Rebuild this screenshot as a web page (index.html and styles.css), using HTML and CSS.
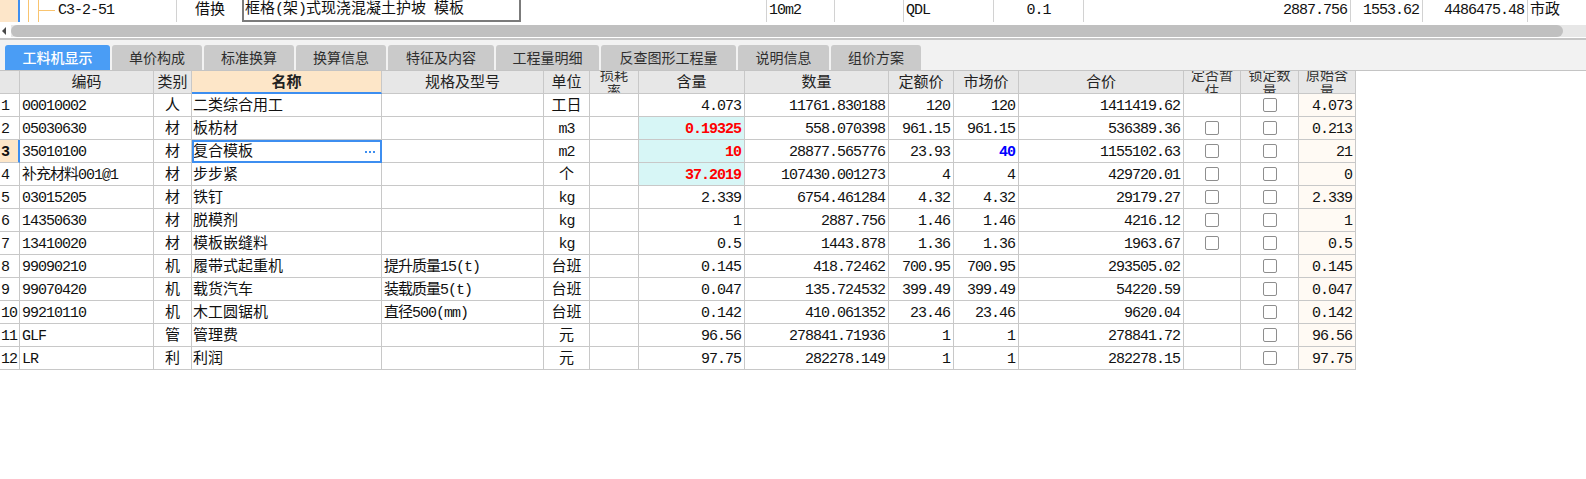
FILE: index.html
```html
<!DOCTYPE html>
<html lang="zh-CN">
<head>
<meta charset="utf-8">
<title>工料机显示</title>
<link rel="stylesheet" href="styles.css">
</head>
<body>
<div class="toprow">
  <div class="tc tsel"></div>
  <div class="tc ttree"><span class="vl v1"></span><span class="vl v2"></span><span class="hl"></span><span class="m tcode">C3-2-51</span></div>
  <div class="tc bl tjie">借换</div>
  <div class="tc tin"><div class="inbox">框格<span class="m">(</span>架<span class="m">)</span>式现浇混凝土护坡<span class="m"> </span>模板</div></div>
  <div class="tc tgap"></div>
  <div class="tc bl m w68 pl">10m2</div>
  <div class="tc bl w69"></div>
  <div class="tc bl m w90 pl">QDL</div>
  <div class="tc bl m w90 c">0.1</div>
  <div class="tc bl m w267 r">2887.756</div>
  <div class="tc bl m w72 r">1553.62</div>
  <div class="tc bl m w105 r">4486475.48</div>
  <div class="tc bl w59 pl">市政</div>
</div>
<div class="hscroll">
  <div class="sarrow"><span class="tri"></span></div>
  <div class="strack"><div class="sthumb"></div></div>
</div>
<div class="sep"></div>
<div class="tabbar">
  <div class="tab active t105">工料机显示</div>
  <div class="tab t90">单价构成</div>
  <div class="tab t90">标准换算</div>
  <div class="tab t90">换算信息</div>
  <div class="tab t106">特征及内容</div>
  <div class="tab t103">工程量明细</div>
  <div class="tab t135">反查图形工程量</div>
  <div class="tab t91">说明信息</div>
  <div class="tab t90">组价方案</div>
</div>
<div class="grid">
  <div class="g h"></div>
  <div class="g h">编码</div>
  <div class="g h">类别</div>
  <div class="g h hsel">名称</div>
  <div class="g h">规格及型号</div>
  <div class="g h">单位</div>
  <div class="g h hw"><span>损耗率</span></div>
  <div class="g h">含量</div>
  <div class="g h">数量</div>
  <div class="g h">定额价</div>
  <div class="g h">市场价</div>
  <div class="g h">合价</div>
  <div class="g h hw"><span>定否暂估</span></div>
  <div class="g h hw"><span>锁定数量</span></div>
  <div class="g h hw"><span>原始含量</span></div>

  <div class="g rn m">1</div><div class="g m code">00010002</div><div class="g c">人</div><div class="g nm">二类综合用工</div><div class="g"></div><div class="g c">工日</div><div class="g"></div><div class="g m r">4.073</div><div class="g m r">11761.830188</div><div class="g m r">120</div><div class="g m r">120</div><div class="g m r">1411419.62</div><div class="g"></div><div class="g cbc"><span class="cb"></span></div><div class="g m r o">4.073</div>

  <div class="g rn m">2</div><div class="g m code">05030630</div><div class="g c">材</div><div class="g nm">板枋材</div><div class="g"></div><div class="g m c">m3</div><div class="g"></div><div class="g m r cy red">0.19325</div><div class="g m r">558.070398</div><div class="g m r">961.15</div><div class="g m r">961.15</div><div class="g m r">536389.36</div><div class="g cbc"><span class="cb"></span></div><div class="g cbc"><span class="cb"></span></div><div class="g m r o">0.213</div>

  <div class="g rn m rsel">3</div><div class="g m code">35010100</div><div class="g c">材</div><div class="g nm csel"><span>复合模板</span><span class="dots"></span></div><div class="g"></div><div class="g m c">m2</div><div class="g"></div><div class="g m r cy red">10</div><div class="g m r">28877.565776</div><div class="g m r">23.93</div><div class="g m r blue">40</div><div class="g m r">1155102.63</div><div class="g cbc"><span class="cb"></span></div><div class="g cbc"><span class="cb"></span></div><div class="g m r o">21</div>

  <div class="g rn m">4</div><div class="g m code">补充材料001@1</div><div class="g c">材</div><div class="g nm">步步紧</div><div class="g"></div><div class="g c">个</div><div class="g"></div><div class="g m r cy red">37.2019</div><div class="g m r">107430.001273</div><div class="g m r">4</div><div class="g m r">4</div><div class="g m r">429720.01</div><div class="g cbc"><span class="cb"></span></div><div class="g cbc"><span class="cb"></span></div><div class="g m r o">0</div>

  <div class="g rn m">5</div><div class="g m code">03015205</div><div class="g c">材</div><div class="g nm">铁钉</div><div class="g"></div><div class="g m c">kg</div><div class="g"></div><div class="g m r">2.339</div><div class="g m r">6754.461284</div><div class="g m r">4.32</div><div class="g m r">4.32</div><div class="g m r">29179.27</div><div class="g cbc"><span class="cb"></span></div><div class="g cbc"><span class="cb"></span></div><div class="g m r o">2.339</div>

  <div class="g rn m">6</div><div class="g m code">14350630</div><div class="g c">材</div><div class="g nm">脱模剂</div><div class="g"></div><div class="g m c">kg</div><div class="g"></div><div class="g m r">1</div><div class="g m r">2887.756</div><div class="g m r">1.46</div><div class="g m r">1.46</div><div class="g m r">4216.12</div><div class="g cbc"><span class="cb"></span></div><div class="g cbc"><span class="cb"></span></div><div class="g m r o">1</div>

  <div class="g rn m">7</div><div class="g m code">13410020</div><div class="g c">材</div><div class="g nm">模板嵌缝料</div><div class="g"></div><div class="g m c">kg</div><div class="g"></div><div class="g m r">0.5</div><div class="g m r">1443.878</div><div class="g m r">1.36</div><div class="g m r">1.36</div><div class="g m r">1963.67</div><div class="g cbc"><span class="cb"></span></div><div class="g cbc"><span class="cb"></span></div><div class="g m r o">0.5</div>

  <div class="g rn m">8</div><div class="g m code">99090210</div><div class="g c">机</div><div class="g nm">履带式起重机</div><div class="g m spec">提升质量15(t)</div><div class="g c">台班</div><div class="g"></div><div class="g m r">0.145</div><div class="g m r">418.72462</div><div class="g m r">700.95</div><div class="g m r">700.95</div><div class="g m r">293505.02</div><div class="g"></div><div class="g cbc"><span class="cb"></span></div><div class="g m r o">0.145</div>

  <div class="g rn m">9</div><div class="g m code">99070420</div><div class="g c">机</div><div class="g nm">载货汽车</div><div class="g m spec">装载质量5(t)</div><div class="g c">台班</div><div class="g"></div><div class="g m r">0.047</div><div class="g m r">135.724532</div><div class="g m r">399.49</div><div class="g m r">399.49</div><div class="g m r">54220.59</div><div class="g"></div><div class="g cbc"><span class="cb"></span></div><div class="g m r o">0.047</div>

  <div class="g rn m">10</div><div class="g m code">99210110</div><div class="g c">机</div><div class="g nm">木工圆锯机</div><div class="g m spec">直径500(mm)</div><div class="g c">台班</div><div class="g"></div><div class="g m r">0.142</div><div class="g m r">410.061352</div><div class="g m r">23.46</div><div class="g m r">23.46</div><div class="g m r">9620.04</div><div class="g"></div><div class="g cbc"><span class="cb"></span></div><div class="g m r o">0.142</div>

  <div class="g rn m">11</div><div class="g m code">GLF</div><div class="g c">管</div><div class="g nm">管理费</div><div class="g"></div><div class="g c">元</div><div class="g"></div><div class="g m r">96.56</div><div class="g m r">278841.71936</div><div class="g m r">1</div><div class="g m r">1</div><div class="g m r">278841.72</div><div class="g"></div><div class="g cbc"><span class="cb"></span></div><div class="g m r o">96.56</div>

  <div class="g rn m">12</div><div class="g m code">LR</div><div class="g c">利</div><div class="g nm">利润</div><div class="g"></div><div class="g c">元</div><div class="g"></div><div class="g m r">97.75</div><div class="g m r">282278.149</div><div class="g m r">1</div><div class="g m r">1</div><div class="g m r">282278.15</div><div class="g"></div><div class="g cbc"><span class="cb"></span></div><div class="g m r o">97.75</div>
</div>
</body>
</html>
```
FILE: styles.css
```css
html, body {
  margin: 0;
  padding: 0;
}
body {
  width: 1586px;
  height: 479px;
  overflow: hidden;
  background: #ffffff;
  color: #111111;
  font-family: "Noto Sans CJK SC", sans-serif;
  font-size: 15px;
}

.m {
  letter-spacing: -1px;
}

/* ---------- top row of the upper table ---------- */
.toprow {
  display: flex;
  height: 22px;
  font-family: "Liberation Mono", "Noto Sans CJK SC", monospace;
}
.tc {
  flex: none;
  box-sizing: border-box;
  height: 22px;
  line-height: 22px;
  white-space: nowrap;
  overflow: hidden;
}
.bl { border-left: 1px solid #d2d2d2; }
.pl { padding-left: 2px; }
.tc.c { text-align: center; }
.tc.r { text-align: right; padding-right: 3px; }
.tsel {
  width: 20px;
  background: #fde6c9;
  border-right: 2px solid #3d8ef0;
}
.ttree {
  width: 156px;
  display: flex;
  align-items: stretch;
}
.vl {
  width: 1px;
  background: #f9c46f;
  flex: none;
}
.v1 { margin-left: 8px; }
.v2 { margin-left: 9px; }
.hl {
  width: 16px;
  height: 1px;
  margin-top: 10px;
  background: #f9c46f;
  flex: none;
}
.tcode { margin-left: 3px; }
.tjie { width: 66px; padding-left: 18px; }
.tin { width: 279px; }
.inbox {
  box-sizing: border-box;
  height: 22px;
  border: 2px solid #7b7b7b;
  border-top: none;
  padding-left: 1px;
  line-height: 20px;
}
.tgap { width: 245px; }
.w59 { width: 59px; }
.w68 { width: 68px; }
.w69 { width: 69px; }
.w72 { width: 72px; }
.w90 { width: 90px; }
.w105 { width: 105px; }
.w267 { width: 267px; }

/* ---------- horizontal scrollbar ---------- */
.hscroll {
  display: flex;
  height: 12px;
  margin-top: 3px;
}
.sarrow {
  width: 11px;
  flex: none;
  display: flex;
  align-items: center;
  padding-left: 2px;
  box-sizing: border-box;
}
.tri {
  width: 0;
  height: 0;
  border-top: 4px solid transparent;
  border-bottom: 4px solid transparent;
  border-right: 4px solid #4a4a4a;
}
.strack {
  flex: 1;
  background: #e7e7e7;
  display: flex;
}
.sthumb {
  width: 1552px;
  background: #c0c0c0;
  border-radius: 6px;
}
.sep {
  height: 2px;
  margin-top: 1px;
  background: #c6c6c6;
}

/* ---------- tabs ---------- */
.tabbar {
  box-sizing: border-box;
  height: 31px;
  background: #f2f2f2;
  border-bottom: 1px solid #c4c4c4;
  display: flex;
  align-items: flex-end;
  gap: 2px;
  padding-left: 5px;
}
.tab {
  box-sizing: border-box;
  height: 25px;
  line-height: 25px;
  text-align: center;
  font-size: 14px;
  color: #2e2e2e;
  background: #cacaca;
  border-radius: 3px 3px 0 0;
  flex: none;
}
.tab.active {
  background: #4a9df5;
  color: #ffffff;
  font-weight: 500;
}
.t90 { width: 90px; }
.t91 { width: 91px; }
.t103 { width: 103px; }
.t105 { width: 105px; }
.t106 { width: 106px; }
.t135 { width: 135px; }

/* ---------- grid ---------- */
.grid {
  display: grid;
  grid-template-columns: 20px 134px 38px 190px 162px 46px 49px 106px 144px 65px 65px 165px 57px 58px 57px;
  grid-auto-rows: 23px;
  width: 1355px;
  font-family: "Liberation Mono", "Noto Sans CJK SC", monospace;
}
.g {
  box-sizing: border-box;
  border-right: 1px solid #c8c8c8;
  border-bottom: 1px solid #c8c8c8;
  line-height: 21px;
  padding: 2px 2px 0 2px;
  white-space: nowrap;
  overflow: hidden;
}
.h {
  background: #e7e7e7;
  color: #222222;
  text-align: center;
  padding: 0;
  font-family: "Noto Sans CJK SC", sans-serif;
  line-height: 20px;
}
.hsel {
  background: #fde6c8;
  font-weight: bold;
  border-bottom: 2px solid #3d8ef0;
  line-height: 20px;
}
.hw {
  white-space: normal;
  font-size: 14px;
  line-height: 16px;
  display: flex;
  align-items: center;
  justify-content: center;
  padding: 0 4px;
  color: #333333;
}
.rn {
  padding-left: 1px;
  padding-right: 0;
}
.rsel {
  background: #fde6c8;
  border-right: 2px solid #3d8ef0;
  font-weight: bold;
}
.code { padding-left: 2px; }
.nm { padding-left: 1px; }
.spec { padding-left: 2px; }
.g.c { text-align: center; padding-left: 0; padding-right: 0; }
.g.r { text-align: right; padding-left: 0; padding-right: 3px; }
.o { background: #fffaf4; }
.cy { background: #d7f6f6; }
.red { color: #ff0000; font-weight: bold; }
.blue { color: #0000ff; font-weight: bold; }
.csel {
  display: flex;
  align-items: center;
  justify-content: space-between;
  outline: 2px solid #3d8ef0;
  outline-offset: -2px;
  position: relative;
  padding-right: 6px;
}
.dots {
  width: 10px;
  height: 2px;
  background: repeating-linear-gradient(to right, #3d8ef0 0 2px, transparent 2px 4px);
}
.cbc {
  display: flex;
  align-items: center;
  justify-content: center;
  padding: 0;
}
.cb {
  box-sizing: border-box;
  width: 14px;
  height: 14px;
  border: 1px solid #8e8e8e;
  border-radius: 2px;
  background: #ffffff;
}
```
